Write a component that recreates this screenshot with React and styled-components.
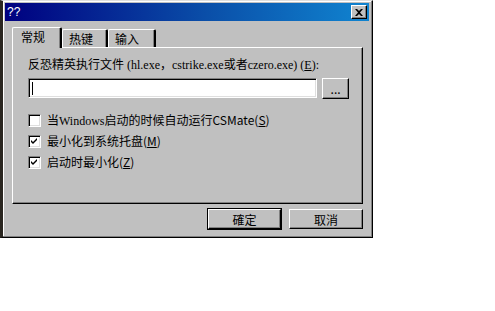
import React, { useState } from "react";
import styled, { createGlobalStyle } from "styled-components";

const Global = createGlobalStyle`
  body {
    margin: 0;
    background: #ffffff;
    font-family: "Noto Sans CJK SC", "DejaVu Sans", sans-serif;
  }
`;

const Window = styled.div`
  box-sizing: border-box;
  width: 373px;
  height: 238px;
  background: #c0c0c0;
  border-top: 1px solid #dfdfdf;
  border-left: 3px solid #2a2620;
  border-right: 1px solid #000;
  border-bottom: 1px solid #000;
  box-shadow: inset -1px -1px 0 #808080, inset 1px 1px 0 #ffffff;
  padding: 2px 3px 3px 2px;
  display: flex;
  flex-direction: column;
`;

const TitleBar = styled.div`
  height: 18px;
  background: linear-gradient(90deg, #000080 0%, #0a4ea8 55%, #1084d0 100%);
  display: flex;
  align-items: center;
  justify-content: space-between;
  padding: 0 2px 0 2px;
  color: #fff;
  font-family: "Liberation Sans", sans-serif;
  font-size: 12px;
`;

const CloseBtn = styled.div`
  box-sizing: border-box;
  width: 16px;
  height: 14px;
  background: #c0c0c0;
  border-top: 1px solid #fff;
  border-left: 1px solid #fff;
  border-right: 1px solid #000;
  border-bottom: 1px solid #000;
  box-shadow: inset -1px -1px 0 #808080;
  display: flex;
  align-items: center;
  justify-content: center;
`;

const Body = styled.div`
  padding: 6px 6px 0 7px;
  display: flex;
  flex-direction: column;
`;

const TabRow = styled.div`
  display: flex;
  align-items: flex-end;
  height: 20px;
  position: relative;
  z-index: 1;
`;

const Tab = styled.div`
  box-sizing: border-box;
  height: ${(p) => (p.$active ? "21px" : "18px")};
  margin-bottom: ${(p) => (p.$active ? "-1px" : "0")};
  padding: 0 ${(p) => (p.$active ? "8px" : "6px")};
  min-width: ${(p) => p.$w}px;
  background: #c0c0c0;
  border-top: 1px solid #fff;
  border-left: 1px solid #fff;
  border-right: 2px solid #000;
  border-top-left-radius: 2px;
  border-top-right-radius: 2px;
  box-shadow: inset -1px 0 0 #808080;
  font-size: 12px;
  line-height: 17px;
  color: #000;
`;

const Panel = styled.div`
  box-sizing: border-box;
  height: 157px;
  background: #c0c0c0;
  border-top: 1px solid #fff;
  border-left: 1px solid #fff;
  border-right: 1px solid #000;
  border-bottom: 1px solid #000;
  box-shadow: inset -1px -1px 0 #808080;
  padding: 9px 13px 0 15px;
  display: flex;
  flex-direction: column;
`;

const Label = styled.div`
  font-size: 12px;
  color: #000;
  line-height: 14px;
  font-family: "Liberation Serif", "Noto Sans CJK SC", serif;
`;

const Cjk = styled.span`
  font-family: "Noto Sans CJK SC", sans-serif;
`;

const Latin = styled.span`
  font-family: "Liberation Serif", serif;
`;

const FileRow = styled.div`
  display: flex;
  gap: 5px;
  margin-top: 6px;
`;

const TextBox = styled.div`
  box-sizing: border-box;
  width: 291px;
  height: 20px;
  background: #fff;
  border-top: 1px solid #808080;
  border-left: 1px solid #808080;
  border-right: 1px solid #fff;
  border-bottom: 1px solid #fff;
  box-shadow: inset 1px 1px 0 #000, inset -1px -1px 0 #dfdfdf;
  display: flex;
  align-items: center;
  padding-left: 3px;
`;

const Caret = styled.div`
  width: 1px;
  height: 13px;
  background: #000;
`;

const Button = styled.div`
  box-sizing: border-box;
  width: ${(p) => p.$w}px;
  height: ${(p) => p.$h || 20}px;
  background: #c0c0c0;
  border-top: 1px solid #fff;
  border-left: 1px solid #fff;
  border-right: 1px solid #000;
  border-bottom: 1px solid #000;
  box-shadow: inset -1px -1px 0 #808080 ${(p) => (p.$default ? ", 0 0 0 1px #000" : "")};
  display: flex;
  align-items: center;
  justify-content: center;
  font-size: 12px;
  color: #000;
`;

const Checks = styled.div`
  display: flex;
  flex-direction: column;
  gap: 7px;
  margin-top: 14px;
`;

const CheckRow = styled.label`
  display: flex;
  align-items: center;
  gap: 6px;
  font-size: 12px;
  line-height: 14px;
  color: #000;
  height: 14px;
`;

const Box = styled.div`
  box-sizing: border-box;
  width: 13px;
  height: 13px;
  background: #fff;
  border-top: 1px solid #808080;
  border-left: 1px solid #808080;
  border-right: 1px solid #fff;
  border-bottom: 1px solid #fff;
  box-shadow: inset 1px 1px 0 #000, inset -1px -1px 0 #dfdfdf;
  display: flex;
  align-items: center;
  justify-content: center;
`;

const Footer = styled.div`
  display: flex;
  justify-content: flex-end;
  gap: 8px;
  margin-top: 5px;
`;

function Check({ checked, children }) {
  return (
    <CheckRow>
      <Box>
        {checked && (
          <svg width="7" height="7" viewBox="0 0 7 7">
            <path d="M0 2 L2 4 L6 0 L6 2 L2 6 L0 4 Z" fill="#000" />
          </svg>
        )}
      </Box>
      <span>{children}</span>
    </CheckRow>
  );
}

export default function App() {
  const [tab] = useState(0);
  const tabs = [
    ["常规", 50],
    ["热键", 46],
    ["输入", 48],
  ];
  return (
    <>
      <Global />
      <Window>
        <TitleBar>
          <span>??</span>
          <CloseBtn>
            <svg width="8" height="7" viewBox="0 0 8 7">
              <path d="M0 0 L2 0 L4 2 L6 0 L8 0 L5 3.5 L8 7 L6 7 L4 5 L2 7 L0 7 L3 3.5 Z" fill="#000" />
            </svg>
          </CloseBtn>
        </TitleBar>
        <Body>
          <TabRow>
            {tabs.map(([t, w], i) => (
              <Tab key={t} $active={i === tab} $w={w}>
                {t}
              </Tab>
            ))}
          </TabRow>
          <Panel>
            <Label>
              <Cjk>反恐精英执行文件</Cjk> (hl.exe<Cjk>，</Cjk>cstrike.exe<Cjk>或者</Cjk>czero.exe) (<u>E</u>):
            </Label>
            <FileRow>
              <TextBox>
                <Caret />
              </TextBox>
              <Button $w={27} $h={21}>...</Button>
            </FileRow>
            <Checks>
              <Check>
                当<Latin>Windows</Latin>启动的时候自动运行CSMate(<u>S</u>)
              </Check>
              <Check checked>
                最小化到系统托盘(<u>M</u>)
              </Check>
              <Check checked>
                启动时最小化(<u>Z</u>)
              </Check>
            </Checks>
          </Panel>
          <Footer>
            <Button $w={73} $default>確定</Button>
            <Button $w={74}>取消</Button>
          </Footer>
        </Body>
      </Window>
    </>
  );
}
